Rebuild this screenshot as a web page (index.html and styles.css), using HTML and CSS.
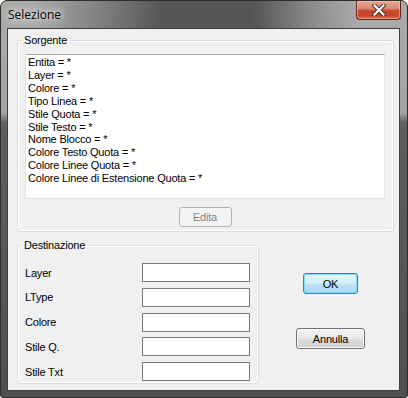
FILE: index.html
```html
<!DOCTYPE html>
<html lang="it">
<head>
    <meta charset="UTF-8">
    <title>Selezione</title>
    <link rel="stylesheet" href="styles.css">
</head>
<body>
    <div class="window">
        <div class="titlebar">
            <span class="title">Selezione</span>
            <div class="close">
                <svg width="14" height="12" viewBox="0 0 14 12">
                    <path d="M2.5 1.5 L11.5 10.5 M11.5 1.5 L2.5 10.5" stroke="#4a2a24" stroke-width="4.2" stroke-linecap="square"/>
                    <path d="M2.5 1.5 L11.5 10.5 M11.5 1.5 L2.5 10.5" stroke="#ffffff" stroke-width="2.2" stroke-linecap="square"/>
                </svg>
            </div>
        </div>
        <div class="client">
            <fieldset class="group source">
                <legend>Sorgente</legend>
                <div class="listbox">
                    <div>Entita = *</div>
                    <div>Layer = *</div>
                    <div>Colore = *</div>
                    <div>Tipo Linea = *</div>
                    <div>Stile Quota = *</div>
                    <div>Stile Testo = *</div>
                    <div>Nome Blocco = *</div>
                    <div>Colore Testo Quota = *</div>
                    <div>Colore Linee Quota = *</div>
                    <div>Colore Linee di Estensione Quota = *</div>
                </div>
                <div class="edit-row">
                    <button class="btn btn-edit" disabled>Edita</button>
                </div>
            </fieldset>

            <div class="lower">
                <fieldset class="group dest">
                    <legend>Destinazione</legend>
                    <div class="field"><label>Layer</label><input type="text"></div>
                    <div class="field"><label>LType</label><input type="text"></div>
                    <div class="field"><label>Colore</label><input type="text"></div>
                    <div class="field"><label>Stile Q.</label><input type="text"></div>
                    <div class="field"><label>Stile Txt</label><input type="text"></div>
                </fieldset>
                <div class="actions">
                    <button class="btn btn-ok">OK</button>
                    <button class="btn btn-cancel">Annulla</button>
                </div>
            </div>
        </div>
    </div>
</body>
</html>
```

FILE: styles.css
```css
body {
    margin: 0;
    background: #fff;
}
.window {
    box-sizing: border-box;
    width: 408px;
    height: 398px;
    border: 1px solid #2e2e2e;
    border-radius: 7px 7px 3px 3px;
    background: linear-gradient(180deg, #aaaaaa 0, #a4a4a4 112px, #5e5e5e 122px, #505050 100%);
    overflow: hidden;
}
.titlebar {
    height: 27px;
    display: flex;
    align-items: flex-start;
    background: linear-gradient(90deg, rgba(0,0,0,0) 8%, rgba(0,0,0,0.25) 25%, rgba(0,0,0,0.5) 40%, rgba(0,0,0,0.5) 62%, rgba(0,0,0,0.15) 78%, rgba(0,0,0,0) 88%);
}
.title {
    font-family: 'Open Sans', 'Noto Sans', sans-serif;
    font-size: 12px;
    color: #000;
    margin-left: 7px;
    margin-top: 6px;
    line-height: 16px;
    text-shadow: 0 0 6px #fff, 0 0 10px #eee;
}
.close {
    margin-left: auto;
    margin-right: 6px;
    width: 45px;
    height: 19px;
    box-sizing: border-box;
    border: 1px solid #5a2a22;
    border-top: none;
    border-radius: 0 0 4px 4px;
    background: linear-gradient(180deg, #e4a493 0%, #d98b78 40%, #c4462e 55%, #c8452c 80%, #d9735a 100%);
    box-shadow: inset 0 0 0 1px rgba(255,220,200,0.45);
    display: flex;
    align-items: center;
    justify-content: center;
}
.client {
    box-sizing: border-box;
    margin-left: 6px;
    width: 393px;
    height: 363px;
    border: 1px solid #3f3f3f;
    background: #f0f0f0;
    font-family: 'Liberation Sans', Arial, sans-serif;
    font-size: 11px;
    letter-spacing: -0.2px;
    color: #000;
}
.group {
    margin: 0;
    border: 1px solid #d5dfe5;
    border-radius: 3px;
    box-shadow: inset 0 0 0 1px #fff;
    min-width: 0;
}
.group legend {
    line-height: 13px;
    padding: 0 2px;
    margin-left: -3px;
}
.source {
    margin: 5px 0 0 9px;
    width: 377px;
    box-sizing: border-box;
    padding: 7px 8px 4px 7px;
}
.listbox {
    box-sizing: border-box;
    width: 360px;
    height: 145px;
    background: #fff;
    border: 1px solid #e2e3ea;
    border-top-color: #abadb3;
    padding: 1px 0 0 2px;
    line-height: 12.9px;
}
.edit-row {
    display: flex;
    justify-content: center;
    margin-top: 8px;
    width: 360px;
}
.btn {
    font-family: 'Liberation Sans', Arial, sans-serif;
    font-size: 11px;
    letter-spacing: -0.2px;
    box-sizing: border-box;
    height: 21px;
    border: 1px solid #707070;
    border-radius: 3px;
    background: linear-gradient(180deg, #f2f2f2 0%, #ebebeb 48%, #dddddd 52%, #cfcfcf 100%);
    box-shadow: inset 0 0 0 1px #fcfcfc;
    color: #000;
    padding: 0;
}
.btn-edit {
    width: 53px;
    height: 20px;
    border-color: #adb2b5;
    background: #f4f4f4;
    box-shadow: none;
    color: #838383;
}
.btn-ok {
    width: 55px;
    border-color: #3c7fb1;
    background: linear-gradient(180deg, #e5f4fc 0%, #d8eefb 48%, #bfe2f6 52%, #a9d7f2 100%);
    box-shadow: inset 0 0 0 1px #7fe0fb;
}
.btn-cancel {
    width: 69px;
}
.lower {
    display: flex;
    margin-top: 7px;
}
.dest {
    margin: 0 0 0 9px;
    width: 242px;
    box-sizing: border-box;
    padding: 11px 8px 2px 7px;
    display: flex;
    flex-direction: column;
    gap: 5.75px;
}
.field {
    display: flex;
    align-items: center;
    height: 19px;
}
.field label {
    width: 117px;
}
.field input {
    box-sizing: border-box;
    width: 108px;
    height: 19px;
    margin: 0;
    border: 1px solid #7a7a7a;
    background: #fff;
    padding: 0 2px;
    font-size: 11px;
}
.actions {
    flex: 1;
    display: flex;
    flex-direction: column;
    align-items: center;
    gap: 34px;
    padding-top: 34px;
    padding-left: 3px;
}
```
